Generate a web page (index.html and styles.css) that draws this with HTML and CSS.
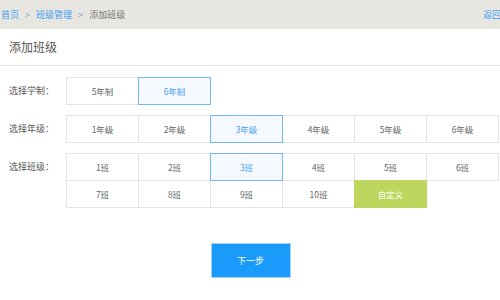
FILE: index.html
```html
<!DOCTYPE html>
<html lang="zh-CN">
<head>
    <meta charset="UTF-8">
    <title>添加班级</title>
    <link rel="stylesheet" href="styles.css">
</head>
<body>
    <div class="page">
        <div class="topbar">
            <div class="crumbs">
                <a class="link">首页</a>
                <span class="sep">&gt;</span>
                <a class="link">班级管理</a>
                <span class="sep">&gt;</span>
                <span class="current">添加班级</span>
            </div>
            <a class="link back">返回</a>
        </div>

        <h2 class="title">添加班级</h2>

        <div class="form">
            <div class="row">
                <span class="label">选择学制：</span>
                <div class="opts">
                    <div class="opt">5年制</div>
                    <div class="opt on">6年制</div>
                </div>
            </div>
            <div class="row">
                <span class="label">选择年级：</span>
                <div class="opts">
                    <div class="opt">1年级</div>
                    <div class="opt">2年级</div>
                    <div class="opt on">3年级</div>
                    <div class="opt">4年级</div>
                    <div class="opt">5年级</div>
                    <div class="opt">6年级</div>
                </div>
            </div>
            <div class="row">
                <span class="label">选择班级：</span>
                <div class="opts">
                    <div class="opt">1班</div>
                    <div class="opt">2班</div>
                    <div class="opt on">3班</div>
                    <div class="opt">4班</div>
                    <div class="opt">5班</div>
                    <div class="opt">6班</div>
                    <div class="opt">7班</div>
                    <div class="opt">8班</div>
                    <div class="opt">9班</div>
                    <div class="opt">10班</div>
                    <div class="opt custom">自定义</div>
                </div>
            </div>
        </div>

        <div class="actions">
            <button class="next">下一步</button>
        </div>
    </div>
</body>
</html>
```

FILE: styles.css
```css
html {
    background: #fff;
}
body {
    margin: 0;
    overflow: hidden;
    font-family: "Noto Sans CJK SC", "Liberation Sans", sans-serif;
    color: #555;
}
.page {
    width: 504px;
}
.topbar {
    height: 29px;
    background: #e8e6e1;
    display: flex;
    justify-content: space-between;
    align-items: center;
    font-size: 9px;
}
.crumbs {
    padding-left: 1px;
}
.link {
    color: #3d9ff2;
}
.sep {
    color: #8aa6c4;
    margin: 0 4px;
}
.current {
    color: #777;
}
.back {
    margin-right: 3px;
}
.title {
    margin: 0;
    height: 36px;
    line-height: 36px;
    padding-left: 9px;
    font-size: 12px;
    font-weight: normal;
    color: #555;
    border-bottom: 1px solid #e2e2e2;
}
.form {
    padding-top: 11px;
}
.row {
    display: flex;
    align-items: flex-start;
    margin-bottom: 11px;
}
.label {
    flex-shrink: 0;
    width: 66px;
    padding-left: 9px;
    box-sizing: border-box;
    white-space: nowrap;
    height: 27px;
    line-height: 27px;
    font-size: 9px;
    color: #555;
}
.opts {
    display: grid;
    grid-template-columns: repeat(6, 72px);
    grid-auto-rows: 27px;
}
.opt {
    width: 73px;
    height: 28px;
    box-sizing: border-box;
    border: 1px solid #e4e4e4;
    background: #fff;
    display: flex;
    align-items: center;
    justify-content: center;
    font-size: 8.5px;
    color: #666;
}
.opt.on {
    position: relative;
    z-index: 1;
    border-color: #74b9f4;
    background: #f4f9ff;
    color: #4aa2f0;
}
.opt.custom {
    position: relative;
    z-index: 1;
    border-color: #bdd65d;
    background: #bdd65d;
    color: #fff;
}
.actions {
    display: flex;
    justify-content: center;
    padding-top: 25px;
    padding-right: 3px;
}
.next {
    width: 80px;
    height: 35px;
    border: 1px solid #9fd6ff;
    background: #1a9bfc;
    color: #fff;
    font-family: "Noto Sans CJK SC", "Liberation Sans", sans-serif;
    font-size: 9px;
}
```
